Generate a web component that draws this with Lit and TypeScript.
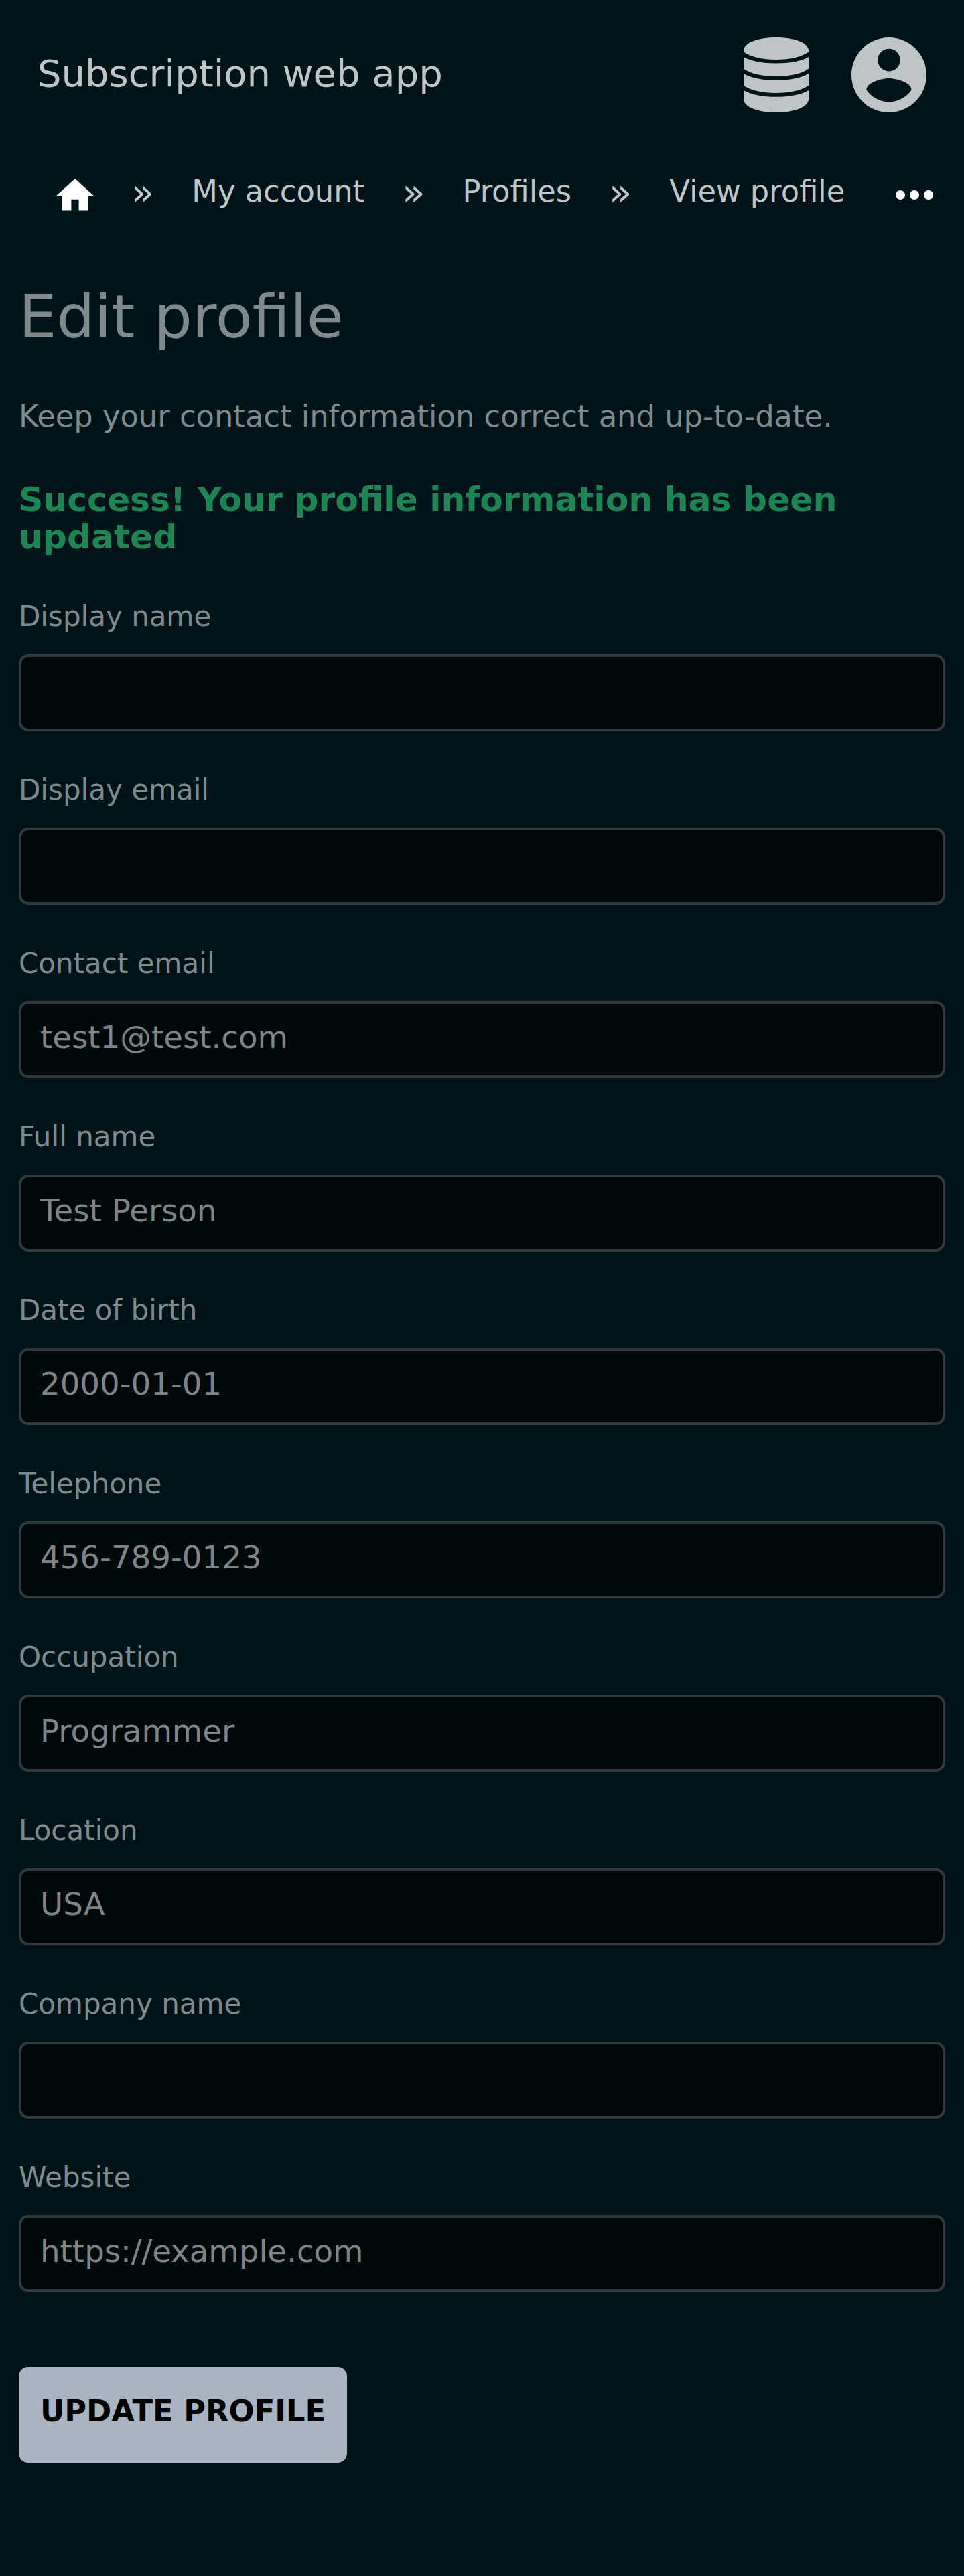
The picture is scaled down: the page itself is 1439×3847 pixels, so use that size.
import { LitElement, html, css } from "lit";
import { customElement } from "lit/decorators.js";

interface Field {
  label: string;
  value: string;
}

const FIELDS: Field[] = [
  { label: "Display name", value: "" },
  { label: "Display email", value: "" },
  { label: "Contact email", value: "test1@test.com" },
  { label: "Full name", value: "Test Person" },
  { label: "Date of birth", value: "2000-01-01" },
  { label: "Telephone", value: "456-789-0123" },
  { label: "Occupation", value: "Programmer" },
  { label: "Location", value: "USA" },
  { label: "Company name", value: "" },
  { label: "Website", value: "https://example.com" },
];

@customElement("app-root")
export class AppRoot extends LitElement {
  static styles = css`
    :host {
      display: block;
      box-sizing: border-box;
      height: 3847px;
      overflow: hidden;
      background: #001318;
      color: #808a8d;
      font-family: "DejaVu Sans", sans-serif;
    }
    * { box-sizing: border-box; margin: 0; }
    .top {
      display: flex;
      align-items: center;
      height: 224px;
      padding: 0 56px;
      color: #bfc5c6;
    }
    .brand { flex: 1; font-size: 56px; line-height: 66px; margin-top: -4px; }
    .db { width: 97px; height: 112px; margin-right: 64px; }
    .user { width: 112px; height: 112px; }
    svg { display: block; flex: none; fill: currentColor; }
    .crumbs {
      display: flex;
      align-items: center;
      height: 126px;
      padding: 0 46px 0 84px;
      color: #bfc5c6;
      font-size: 44.8px;
      line-height: 54px;
    }
    .home { width: 56px; height: 47.6px; color: #fff; margin: 7.5px 56px 0 0; }
    .crumb { white-space: nowrap; margin: 0 56px 3px; }
    .sep { font-size: 56px; line-height: 66px; }
    .dots { width: 56px; height: 14px; color: #fff; margin: 7px 0 0 auto; }
    .body { padding: 0 28px; }
    .title { font-size: 89.6px; line-height: 106px; font-weight: 400; padding-top: 70px; }
    .lead { font-size: 44.8px; line-height: 54px; margin-top: 68.5px; }
    .success { font-size: 50.4px; line-height: 56px; font-weight: 700; color: #198754; margin-top: 69px; }
    .form { display: flex; flex-direction: column; margin-top: 66px; }
    .field { height: 259px; display: flex; flex-direction: column; }
    .label { font-size: 42px; line-height: 50px; }
    .input {
      height: 115px;
      margin-top: 31px;
      border: 4px solid #32383d;
      border-radius: 14px;
      background: #00080a;
      padding: 22px 28px 0;
      font-size: 46.67px;
      line-height: 56px;
      color: #808486;
    }
    .submit {
      align-self: flex-start;
      width: 490px;
      height: 143px;
      margin-top: 49.5px;
      border: 0;
      border-radius: 14px;
      background: #a9b4c0;
      color: #000;
      font: 700 44.8px/54px "DejaVu Sans", sans-serif;
      padding: 0 0 12px;
    }
  `;

  render() {
    return html`
      <header class="top">
        <div class="brand">Subscription web app</div>
        <svg class="db" viewBox="0 0 97 112">
          <path d="M0 18.500C2 7 22 0 48.500 0S95 7 97 18.500v2.800c-10 7.500-27 11.700-48.500 11.700S10 28.800 0 21.300Z" />
          <path d="M0 29c11 6.500 28 9.500 48.500 9.500S86 35.500 97 29v17.500c-10 7.500-27 11.500-48.500 11.500S10 54 0 46.500Z" />
          <path d="M0 54c11 6.500 28 9.800 48.500 9.800S86 60.500 97 54v17.500c-10 7.500-27 11.500-48.500 11.500S10 79 0 71.500Z" />
          <path d="M0 79c11 6.500 28 9.800 48.500 9.800S86 85.500 97 79v14.500c-2 11-22 18.500-48.500 18.500S2 104.500 0 93.500Z" />
        </svg>
        <svg class="user" viewBox="2 2 20 20">
          <path d="M12 2C6.480 2 2 6.480 2 12s4.480 10 10 10 10-4.480 10-10S17.520 2 12 2zm0 3c1.660 0 3 1.340 3 3s-1.340 3-3 3-3-1.340-3-3 1.340-3 3-3zm0 14.200c-2.500 0-4.710-1.280-6-3.220.030-1.990 4-3.080 6-3.080 1.990 0 5.970 1.090 6 3.080-1.290 1.940-3.500 3.220-6 3.220z" />
        </svg>
      </header>
      <nav class="crumbs">
        <svg class="home" viewBox="2 3 20 17"><path d="M10 20v-6h4v6h5v-8h3L12 3 2 12h3v8z" /></svg>
        <span class="sep">»</span>
        <span class="crumb">My account</span>
        <span class="sep">»</span>
        <span class="crumb">Profiles</span>
        <span class="sep">»</span>
        <span class="crumb">View profile</span>
        <svg class="dots" viewBox="0 0 56 14"><circle cx="7" cy="7" r="7" /><circle cx="28" cy="7" r="7" /><circle cx="49" cy="7" r="7" /></svg>
      </nav>
      <main class="body">
        <h1 class="title">Edit profile</h1>
        <p class="lead">Keep your contact information correct and up-to-date.</p>
        <p class="success">Success! Your profile information has been updated</p>
        <form class="form">
          ${FIELDS.map(
            (f) => html`<div class="field"><div class="label">${f.label}</div><div class="input">${f.value}</div></div>`
          )}
          <button class="submit" type="button">UPDATE PROFILE</button>
        </form>
      </main>
    `;
  }
}
